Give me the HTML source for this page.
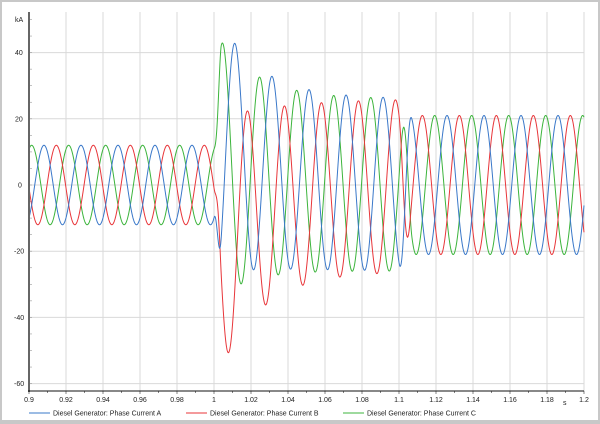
<!DOCTYPE html>
<html><head><meta charset="utf-8"><style>
html,body{margin:0;padding:0;background:#fff}
body{width:600px;height:424px;overflow:hidden;position:relative;font-family:"Liberation Sans",sans-serif}
#frame{position:absolute;left:0;top:0;width:596px;height:418px;border:2px solid #c8c8c8;border-bottom:4px solid #c8c8c8}
svg{position:absolute;left:0;top:0}
text{font-family:"Liberation Sans",sans-serif;font-size:7px;fill:#222}
</style></head><body>
<div id="frame"></div>
<svg id="s" width="600" height="424" viewBox="0 0 600 424"></svg>
<script>
var s=document.getElementById('s');var h='';
function X(t){return 29+(t-0.9)*1850;}
function Y(v){return 185-v*3.31;}
for(var i=1;i<=15;i++){var x=X(0.9+i*0.02);h+='<line x1="'+x+'" y1="12" x2="'+x+'" y2="391" stroke="#d9d9d9" stroke-width="1"/>';}
[40,20,0,-20,-40,-60].forEach(function(v){h+='<line x1="29" y1="'+Y(v)+'" x2="584" y2="'+Y(v)+'" stroke="#d9d9d9" stroke-width="1"/>';h+='<text x="'+(v<0?14:(v==0?18:15))+'" y="'+(Y(v)+2.5)+'">'+v+'</text>';});
h+='<text x="15" y="22">kA</text>';
for(var v=-60;v<=50;v+=5){h+='<line x1="29" y1="'+Y(v)+'" x2="32" y2="'+Y(v)+'" stroke="#999" stroke-width="0.6"/>';}
var labs=['0.9','0.92','0.94','0.96','0.98','1','1.02','1.04','1.06','1.08','1.1','1.12','1.14','1.16','1.18','1.2'];
for(var i=0;i<16;i++){var x=X(0.9+i*0.02);h+='<text x="'+x+'" y="402" text-anchor="middle">'+labs[i]+'</text>';}
for(var i=0;i<=30;i++){var x=X(0.9+i*0.01);h+='<line x1="'+x+'" y1="391" x2="'+x+'" y2="'+(i%2?393:394)+'" stroke="#333" stroke-width="0.6"/>';}
h+='<text x="563" y="405" font-size="6">s</text>';
var W=2*Math.PI*50;
function val(ph,t){
 var off=[0,-1/150,1/150][ph];
 var dc=[13,6,-20][ph];
 var pre=12*Math.cos(W*(t-0.9081-off));
 var mid=(26+15*Math.exp(-(t-1)/0.02))*Math.cos(W*(t-1.0114-off))+dc*Math.exp(-(t-1)/0.025);
 var post=21*Math.cos(W*(t-1.12595-off));
 if(t<1)return pre;
 if(t<1.004){var a=(t-1)/0.004;a=a*a*(3-2*a);return pre*(1-a)+mid*a;}
 if(t<1.1)return mid;
 if(t<1.107){var a=(t-1.1)/0.007;a=a*a*(3-2*a);return mid*(1-a)+post*a;}
 return post;
}
var cols=['#3a78c9','#3cb43c','#e8363a'];
[1,2,0].forEach(function(ph){var d='';for(var t=0.9;t<=1.2001;t+=0.0002){d+=(d?'L':'M')+X(t).toFixed(2)+','+Y(val(ph,t)).toFixed(2);}
h+='<path d="'+d+'" fill="none" stroke="'+cols[ph]+'" stroke-width="1"/>';});
h+='<line x1="29" y1="12" x2="29" y2="392" stroke="#666" stroke-width="2"/>';
h+='<line x1="28" y1="391" x2="584" y2="391" stroke="#111" stroke-width="1"/>';
h+='<line x1="29" y1="413" x2="50" y2="413" stroke="#3a78c9" stroke-width="1"/><text x="53" y="415.5">Diesel Generator: Phase Current A</text>';
h+='<line x1="186" y1="413" x2="207" y2="413" stroke="#e8363a" stroke-width="1"/><text x="210" y="415.5">Diesel Generator: Phase Current B</text>';
h+='<line x1="343" y1="413" x2="364" y2="413" stroke="#3cb43c" stroke-width="1"/><text x="367" y="415.5">Diesel Generator: Phase Current C</text>';
s.innerHTML=h;
</script>
</body></html>
